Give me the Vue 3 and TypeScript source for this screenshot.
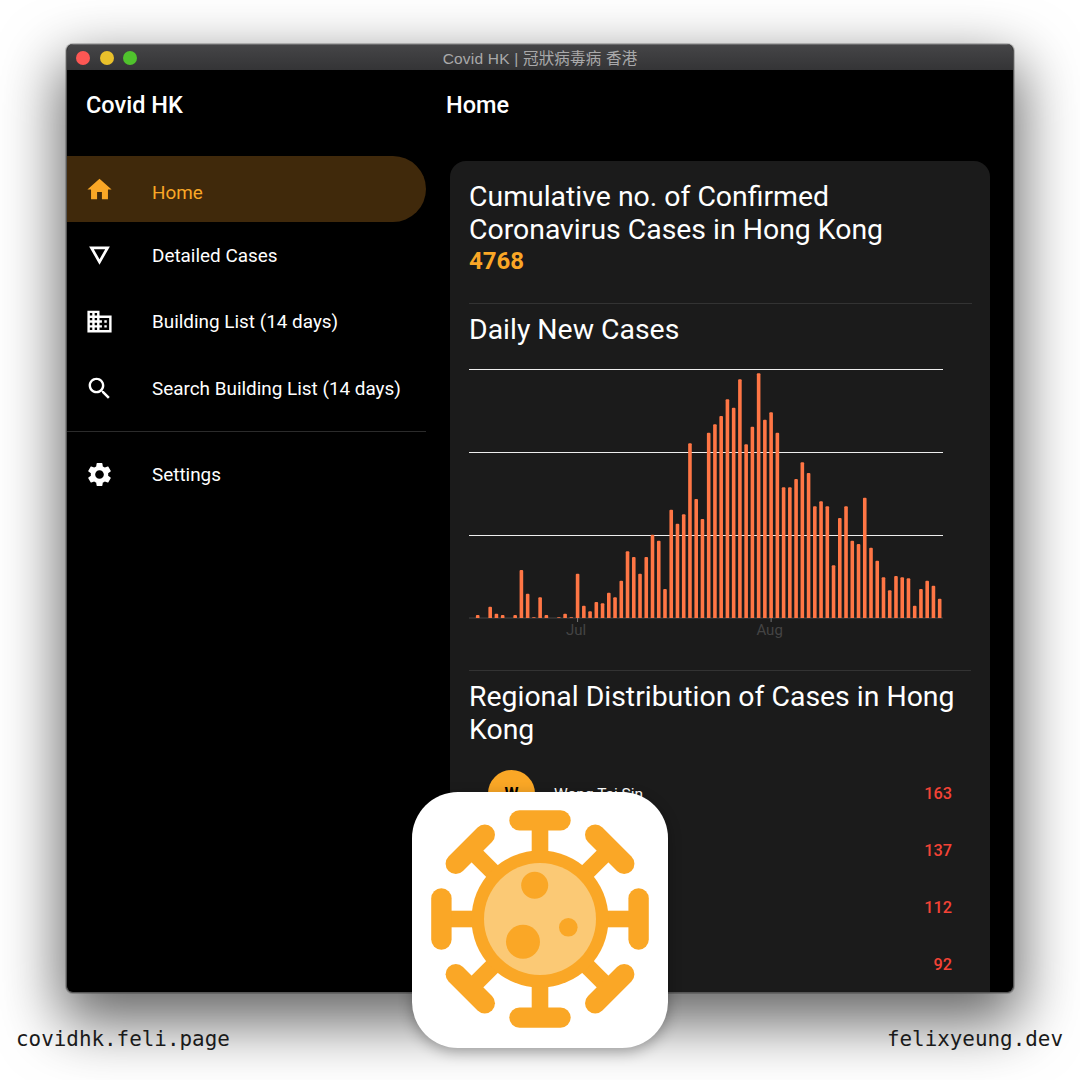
<template>
  <div class="page">
    <div class="window">
      <div class="titlebar">
        <div class="lights">
          <span class="light red"></span>
          <span class="light yellow"></span>
          <span class="light green"></span>
        </div>
        <span class="window-title">Covid HK | 冠狀病毒病 香港</span>
      </div>

      <div class="window-body">
        <aside class="sidebar">
          <div class="brand">Covid HK</div>
          <nav class="nav">
            <template v-for="item in navItems" :key="item.label">
              <div v-if="item.divider" class="nav-divider"></div>
              <div class="nav-item" :class="{ active: item.active }">
                <svg class="nav-icon" viewBox="0 0 24 24">
                  <path :d="item.icon" fill="currentColor" fill-rule="evenodd" />
                </svg>
                <span>{{ item.label }}</span>
              </div>
            </template>
          </nav>
        </aside>

        <main class="main">
          <div class="page-title">Home</div>
          <section class="card">
            <h2 class="heading">Cumulative no. of Confirmed Coronavirus Cases in Hong Kong</h2>
            <div class="total">4768</div>
            <div class="divider first"></div>

            <h2 class="heading">Daily New Cases</h2>
            <svg class="chart" width="474" height="280" viewBox="0 0 474 280">
              <line v-for="y in gridLines" :key="y" x1="0" x2="474" :y1="y" :y2="y" class="grid" />
              <line x1="0" x2="474" :y1="baseY" :y2="baseY" class="axis" />
              <path
                v-for="(h, i) in bars"
                :key="i"
                :d="barPath(i, h)"
                class="bar"
              />
              <template v-for="tick in ticks" :key="tick.label">
                <line :x1="barX(tick.slot)" :x2="barX(tick.slot)" :y1="baseY" :y2="baseY + 4" class="tick" />
                <text :x="barX(tick.slot) - 1.5" :y="baseY + 17" class="tick-label">{{ tick.label }}</text>
              </template>
            </svg>
            <div class="divider second"></div>

            <h2 class="heading">Regional Distribution of Cases in Hong Kong</h2>
            <ul class="regions">
              <li v-for="r in regions" :key="r.name" class="region">
                <span class="avatar">{{ r.name[0] }}</span>
                <span class="region-name">{{ r.name }}</span>
                <span class="region-count">{{ r.count }}</span>
              </li>
            </ul>
          </section>
        </main>
      </div>
    </div>

    <div class="footer">
      <span>covidhk.feli.page</span>
      <span>felixyeung.dev</span>
    </div>

    <div class="app-icon">
      <svg width="256" height="256" viewBox="-128 -127 256 256">
        <g v-for="a in armAngles" :key="a" :transform="`rotate(${a})`">
          <rect x="-8.3" y="-95" width="16.6" height="40" fill="#faa726" />
          <rect x="-30.7" y="-108.8" width="61.4" height="20.4" rx="10.2" fill="#faa726" />
        </g>
        <circle r="68.5" fill="#faa726" />
        <circle r="56" fill="#fbc975" />
        <circle cx="-5.3" cy="-33.7" r="13.5" fill="#faa726" />
        <circle cx="28.3" cy="8.3" r="9.3" fill="#faa726" />
        <circle cx="-17" cy="22.7" r="17" fill="#faa726" />
      </svg>
    </div>
  </div>
</template>

<script setup lang="ts">
interface NavItem {
  label: string;
  icon: string;
  active?: boolean;
  divider?: boolean;
}

const navItems: NavItem[] = [
  {
    label: 'Home',
    active: true,
    icon: 'M10 20v-6h4v6h5v-8h3L12 3 2 12h3v8z',
  },
  {
    label: 'Detailed Cases',
    icon: 'M3.4 4.5H20.6L12 19.6ZM7.3 6.8L12 15L16.7 6.8Z',
  },
  {
    label: 'Building List (14 days)',
    icon: 'M12 7V3H2v18h20V7H12zM6 19H4v-2h2v2zm0-4H4v-2h2v2zm0-4H4V9h2v2zm0-4H4V5h2v2zm4 12H8v-2h2v2zm0-4H8v-2h2v2zm0-4H8V9h2v2zm0-4H8V5h2v2zm10 12h-8v-2h2v-2h-2v-2h2v-2h-2V9h8v10zm-2-8h-2v2h2v-2zm0 4h-2v2h2v-2z',
  },
  {
    label: 'Search Building List (14 days)',
    icon: 'M15.5 14h-.79l-.28-.27C15.41 12.59 16 11.11 16 9.5 16 5.91 13.09 3 9.5 3S3 5.91 3 9.5 5.91 16 9.5 16c1.61 0 3.09-.59 4.23-1.57l.27.28v.79l5 4.99L20.49 19l-4.99-5zm-6 0C7.01 14 5 11.99 5 9.5S7.01 5 9.5 5 14 7.01 14 9.5 11.99 14 9.5 14z',
  },
  {
    label: 'Settings',
    divider: true,
    icon: 'M19.14 12.94c.04-.3.06-.61.06-.94 0-.32-.02-.64-.07-.94l2.03-1.58c.18-.14.23-.41.12-.61l-1.92-3.32c-.12-.22-.37-.29-.59-.22l-2.39.96c-.5-.38-1.03-.7-1.62-.94l-.36-2.54c-.04-.24-.24-.41-.48-.41h-3.84c-.24 0-.43.17-.47.41l-.36 2.54c-.59.24-1.13.57-1.62.94l-2.39-.96c-.22-.08-.47 0-.59.22L2.74 8.87c-.12.21-.08.47.12.61l2.03 1.58c-.05.3-.09.63-.09.94s.02.64.07.94l-2.03 1.58c-.18.14-.23.41-.12.61l1.92 3.32c.12.22.37.29.59.22l2.39-.96c.5.38 1.03.7 1.62.94l.36 2.54c.05.24.24.41.48.41h3.84c.24 0 .44-.17.47-.41l.36-2.54c.59-.24 1.13-.56 1.62-.94l2.39.96c.22.08.47 0 .59-.22l1.92-3.32c.12-.22.07-.47-.12-.61l-2.01-1.58zM12 15.6c-1.98 0-3.6-1.62-3.6-3.6s1.62-3.6 3.6-3.6 3.6 1.62 3.6 3.6-1.62 3.6-3.6 3.6z',
  },
];

// bar heights in px, read off the chart, one per day
const bars = [
  3, 0, 11.3, 4.3, 3, 0, 3, 48, 24.3, 0.7, 20.7, 3, 0, 0.7, 4.3, 0.7, 44.3, 12.3, 6.7, 16,
  14.7, 25.3, 20.7, 37.3, 66.7, 61, 44.3, 61, 83.3, 77.3, 29, 108.3, 94.3, 103.7, 174.7, 119, 99, 185.3, 193.7, 202,
  218.7, 210.3, 238.7, 173.7, 191.3, 244.7, 198.3, 205.7, 185.3, 130.7, 130.7, 139, 155.7, 145, 111.7, 116.7, 111.7, 52.7, 100, 111.7,
  77.3, 74, 120.3, 70.3, 57.3, 40.7, 27.7, 42, 40.7, 39.7, 12.3, 29, 37.3, 32.3, 19.3,
];

const baseY = 258;
const gridLines = [9.5, 92.5, 175.5];
const ticks = [
  { label: 'Jul', slot: 16 },
  { label: 'Aug', slot: 47 },
];
const armAngles = [0, 45, 90, 135, 180, 225, 270, 315];

const regions = [
  { name: 'Wong Tai Sin', count: 163 },
  { name: 'Kwun Tong', count: 137 },
  { name: 'Sha Tin', count: 112 },
  { name: 'Yau Tsim Mong', count: 92 },
];

function barX(slot: number) {
  return 8.7 + slot * 6.243;
}

// rounded on top only, square on the axis
function barPath(slot: number, h: number) {
  if (h <= 0) return '';
  const w = 3.6;
  const x = barX(slot) - w / 2;
  const r = Math.min(1, h);
  return `M${x} ${baseY}V${baseY - h + r}Q${x} ${baseY - h} ${x + r} ${baseY - h}H${x + w - r}Q${x + w} ${baseY - h} ${x + w} ${baseY - h + r}V${baseY}Z`;
}
</script>

<style>
html,
body {
  margin: 0;
  background: #fff;
}
</style>

<style scoped>
.page {
  position: relative;
  box-sizing: border-box;
  width: 1080px;
  height: 1080px;
  padding: 44px 66px 0;
  background: #fff;
  overflow: hidden;
  font-family: Roboto, "Noto Sans CJK TC", sans-serif;
}

.window {
  display: flex;
  flex-direction: column;
  height: 949px;
  box-sizing: border-box;
  border-radius: 7px;
  overflow: hidden;
  background: #000;
  border-right: 1px solid #555;
  border-left: 1px solid #555;
  border-bottom: 1px solid #555;
  box-shadow: 0 24px 60px 6px rgba(0, 0, 0, 0.6), 0 0 0 1px rgba(0, 0, 0, 0.2);
}

.titlebar {
  position: relative;
  flex: none;
  display: flex;
  align-items: center;
  justify-content: center;
  height: 26px;
  box-sizing: border-box;
  padding-bottom: 2px;
  background: linear-gradient(#454547, #343436);
  border-top: 1px solid #6a6a6c;
}

.lights {
  position: absolute;
  left: 9px;
  top: 6px;
  display: flex;
  gap: 9.5px;
}

.light {
  width: 14px;
  height: 14px;
  border-radius: 50%;
}

.red { background: #fd5754; }
.yellow { background: #e9c02b; }
.green { background: #50c22d; }

.window-title {
  font-family: "Liberation Sans", "Noto Sans CJK TC", sans-serif;
  font-size: 15.5px;
  letter-spacing: 0.2px;
  color: #a9a9aa;
}

.window-body {
  flex: 1;
  display: flex;
  min-height: 0;
}

.sidebar {
  flex: none;
  width: 359px;
}

.brand,
.page-title {
  height: 70px;
  line-height: 71px;
  font-size: 23.5px;
  font-weight: 500;
  color: #fff;
}

.brand {
  padding-left: 19px;
}

.nav {
  padding-top: 16px;
}

.nav-item {
  display: flex;
  align-items: center;
  height: 66.3px;
  padding-left: 18px;
  font-size: 18.9px;
  color: #fff;
}

.nav-item.active {
  border-radius: 0 33px 33px 0;
  background: #40290b;
  color: #faa726;
}

.nav-icon {
  flex: none;
  width: 29px;
  height: 29px;
  margin-right: 38px;
}

.nav-item.active span {
  position: relative;
  top: 3px;
}

.nav-divider {
  height: 1px;
  margin: 10px 0 9px;
  background: #2b2b2b;
}

.main {
  flex: 1;
  min-width: 0;
  padding-left: 20px;
}

.page-title {
  margin-bottom: 21px;
}

.card {
  width: 540px;
  margin-left: 4px;
  box-sizing: border-box;
  padding: 19px 18px 0 19px;
  border-radius: 16px 16px 0 0;
  background: #1b1b1b;
  color: #fff;
}

.heading {
  margin: 0;
  font-size: 28.4px;
  font-weight: 400;
  line-height: 33px;
}

.total {
  font-size: 24px;
  font-weight: 700;
  line-height: 30px;
  color: #faa726;
}

.divider {
  height: 1px;
  background: #333;
}

.divider.first {
  margin: 27px 0 9px;
}

.divider.second {
  margin: 30px 1px 9px 0;
}

.chart {
  display: block;
  margin-top: 14px;
}

.grid {
  stroke: #eee;
  stroke-width: 1;
}

.axis {
  stroke: #444;
  stroke-width: 1;
}

.tick {
  stroke: #777;
  stroke-width: 1;
}

.tick-label {
  font-size: 15px;
  fill: #444;
  text-anchor: middle;
}

.bar {
  fill: #ff7645;
}

.regions {
  list-style: none;
  margin: 19px 0 0;
  padding: 0 19px;
}

.region {
  display: flex;
  align-items: center;
  height: 57px;
}

.avatar {
  flex: none;
  display: flex;
  align-items: center;
  justify-content: center;
  width: 47px;
  height: 47px;
  margin-right: 19px;
  border-radius: 50%;
  background: #faa726;
  color: #000;
  font-size: 16px;
  font-weight: 700;
}

.region-name {
  flex: 1;
  font-size: 15.5px;
}

.region-count {
  margin-right: 1px;
  font-size: 16.3px;
  font-weight: 500;
  color: #f44336;
}

.footer {
  display: flex;
  justify-content: space-between;
  margin: 33px -49px 0 -50px;
  font-family: "DejaVu Sans Mono", "Liberation Mono", monospace;
  font-size: 20.9px;
  line-height: 26px;
  color: #1a1a1a;
}

.app-icon {
  position: absolute;
  left: 412px;
  top: 792px;
  width: 256px;
  height: 256px;
  border-radius: 46px;
  background: #fff;
  box-shadow: 0 4px 14px rgba(0, 0, 0, 0.3);
}

.app-icon svg {
  display: block;
}
</style>
